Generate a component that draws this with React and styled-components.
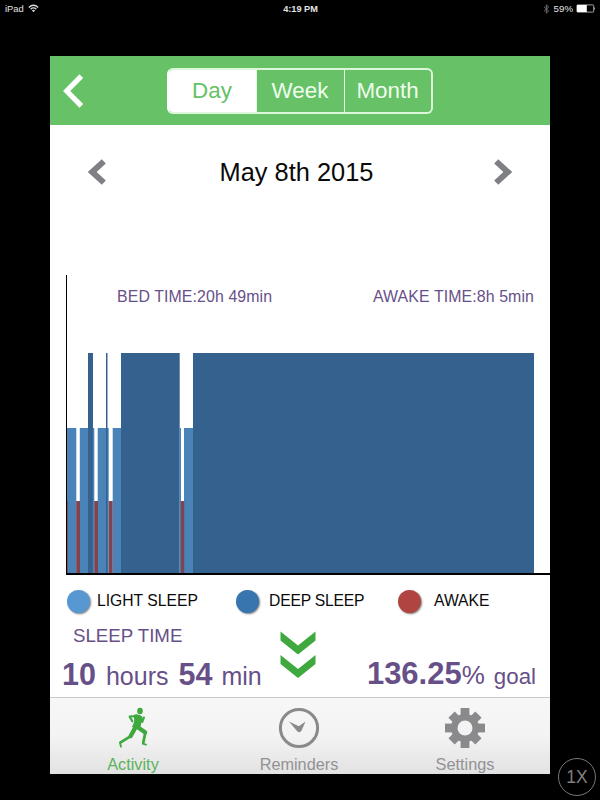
import { useState } from "react";
import styled, { createGlobalStyle } from "styled-components";

const colors = {
  green: "#66c167",
  greenIcon: "#3fa93f",
  purple: "#675088",
  grey: "#8a8a8c",
  deep: "#35618f",
  light: "#4983b7",
  awake: "#80434f",
};

// x positions are relative to the y axis
const bars = [
  { x: 0, w: 9.3, type: "light" },
  { x: 12.8, w: 8.7, type: "light" },
  { x: 21, w: 5, type: "deep" },
  { x: 25.8, w: 1.5, type: "light" },
  { x: 30.7, w: 11, type: "light" },
  { x: 39, w: 1.5, type: "deep" },
  { x: 45.7, w: 8.5, type: "light" },
  { x: 54, w: 58.7, type: "deep" },
  { x: 112.5, w: 1.5, type: "light" },
  { x: 117, w: 9, type: "light" },
  { x: 126, w: 341, type: "deep" },
  { x: 0, w: 0.8, type: "awake" },
  { x: 9.2, w: 3.8, type: "awake" },
  { x: 27.2, w: 3.8, type: "awake" },
  { x: 41.7, w: 4, type: "awake" },
  { x: 113.8, w: 3.4, type: "awake" },
];
const heights = { deep: 220, light: 145, awake: 72 };

const legend = [
  { label: "LIGHT SLEEP", color: "#5797d2", width: 169, gap: 6 },
  { label: "DEEP SLEEP", color: "#3874ae", width: 162, gap: 9, spacing: -0.2 },
  { label: "AWAKE", color: "#b04440", width: 110, gap: 12 },
];

const RunnerIcon = () => (
  <svg width="30" height="42" viewBox="205 50 90 126">
    <ellipse cx="271" cy="62" rx="8.5" ry="10" fill={colors.greenIcon} />
    <path
      d="M253 73 Q268 69 279 80 L274 104 Q272 116 257 117 L247 109 Q256 96 253 83 Z"
      fill={colors.greenIcon}
    />
    <g
      fill="none"
      stroke={colors.greenIcon}
      strokeLinecap="round"
      strokeLinejoin="round"
    >
      <path d="M259 77 L240 79 L248 93" strokeWidth="6.5" />
      <path d="M274 83 L278 95 L283 81" strokeWidth="6" />
      <path d="M260 108 L286 126" strokeWidth="13" />
      <path d="M287 127 L281 156" strokeWidth="8.5" />
      <path d="M279 160 L289 163" strokeWidth="5.5" />
      <path d="M258 109 Q252 121 243 137" strokeWidth="13" />
      <path d="M242 138 L213 156" strokeWidth="8.5" />
      <path d="M211 157 L214 169" strokeWidth="5.5" />
    </g>
  </svg>
);

const ClockIcon = () => (
  <svg width="42" height="42" viewBox="-21 -21 42 42">
    <circle r="18.6" fill="none" stroke={colors.grey} strokeWidth="3" />
    <path
      d="M-10 -6.5 L-0.2 -1.8 L6.5 -6.5 L2.6 2.6 Q0.6 5.4 -1.8 3.2 Z"
      fill={colors.grey}
    />
  </svg>
);

const GearIcon = () => (
  <svg width="42" height="42" viewBox="-21 -21 42 42">
    <g fill={colors.grey}>
      {[0, 45, 90, 135].map((angle) => (
        <rect
          key={angle}
          x="-4.4"
          y={angle % 90 ? -19 : -20}
          width="8.8"
          height={angle % 90 ? 38 : 40}
          transform={`rotate(${angle})`}
        />
      ))}
      <circle r="14" />
    </g>
    <circle r="7.5" fill="#f3f3f4" />
  </svg>
);

const tabs = [
  { name: "Activity", Icon: RunnerIcon },
  { name: "Reminders", Icon: ClockIcon },
  { name: "Settings", Icon: GearIcon },
];

const App = () => {
  const [range, setRange] = useState("Day");
  const [tab, setTab] = useState("Activity");
  return (
    <Screen>
      <GlobalStyle />
      <StatusBar>
        <StatusGroup>
          iPad
          <svg width="11" height="9" viewBox="0 0 11 9" fill="none" stroke="#ddd">
            <path d="M0.8 3.4 Q5.5 -0.9 10.2 3.4" strokeWidth="1.3" />
            <path d="M2.6 5.2 Q5.5 2.6 8.4 5.2" strokeWidth="1.3" />
            <path d="M5.5 8.2 L3.9 6.5 Q5.5 5.2 7.1 6.5 Z" fill="#ddd" stroke="none" />
          </svg>
        </StatusGroup>
        <Clock>4:19 PM</Clock>
        <StatusGroup $end>
          <svg width="7" height="10" viewBox="0 0 7 10" fill="none" stroke="#777">
            <path d="M1 2.7 L5.7 7 L3.4 9.2 V0.8 L5.7 3 L1 7.3" strokeWidth="0.9" />
          </svg>
          <Battery>59%</Battery>
          <svg width="20" height="9" viewBox="0 0 20 9">
            <rect x="0.9" y="0.9" width="16.8" height="7.2" rx="0.8" fill="none" stroke="#ccc" strokeWidth="0.8" />
            <rect x="1" y="1" width="9.8" height="7" fill="#fff" />
            <path d="M18.2 3 Q20 4.5 18.2 6 Z" fill="#ccc" />
          </svg>
        </StatusGroup>
      </StatusBar>

      <Phone>
        <Header>
          <IconButton>
            <svg width="22" height="36" viewBox="0 0 22 36">
              <path d="M18.3 3.2 L3.7 18 L18.3 32.8" fill="none" stroke="#fff" strokeWidth="5.2" />
            </svg>
          </IconButton>
          <Segments>
            {["Day", "Week", "Month"].map((name) => (
              <Segment key={name} $active={range === name} onClick={() => setRange(name)}>
                {name}
              </Segment>
            ))}
          </Segments>
        </Header>

        <DateRow>
          <IconButton>
            <svg width="20" height="28" viewBox="0 0 20 28">
              <path d="M16.8 3.4 L5.2 14 L16.8 24.6" fill="none" stroke="#7f8084" strokeWidth="6" />
            </svg>
          </IconButton>
          <DateText>May 8th 2015</DateText>
          <IconButton>
            <svg width="20" height="28" viewBox="0 0 20 28">
              <path d="M3.2 3.4 L14.8 14 L3.2 24.6" fill="none" stroke="#7f8084" strokeWidth="6" />
            </svg>
          </IconButton>
        </DateRow>

        <Chart>
          <ChartLabels>
            <span>BED TIME:20h 49min</span>
            <span>AWAKE TIME:8h 5min</span>
          </ChartLabels>
          <svg width="482" height="220" viewBox="0 0 482 220">
            {bars.map(({ x, w, type }) => (
              <rect
                key={`${type}-${x}`}
                x={x}
                y={220 - heights[type]}
                width={w}
                height={heights[type]}
                fill={colors[type]}
              />
            ))}
          </svg>
        </Chart>

        <Legend>
          {legend.map(({ label, color, width, gap, spacing }) => (
            <LegendItem key={label} $width={width} $gap={gap} $spacing={spacing}>
              <Dot $color={color} />
              {label}
            </LegendItem>
          ))}
        </Legend>

        <Summary>
          <SleepTime>
            <SummaryTitle>SLEEP TIME</SummaryTitle>
            <Value>
              <Big>10</Big>
              <Unit $left={10}>hours</Unit>
              <Big $left={10}>54</Big>
              <Unit $left={9}>min</Unit>
            </Value>
          </SleepTime>
          <MoreButton>
            <svg width="36" height="48" viewBox="0 0 36 48" fill={colors.greenIcon}>
              <path d="M0.5 0.5 L18 14.5 L35.5 0.5 V9.5 L18 23.4 L0.5 9.5 Z" />
              <path d="M0.5 24 L18 38 L35.5 24 V33 L18 47 L0.5 33 Z" />
            </svg>
          </MoreButton>
          <Goal>
            <Big $size={31}>136.25</Big>
            <Unit $size={26}>%</Unit>
            <Unit $size={22.3} $left={9}>goal</Unit>
          </Goal>
        </Summary>

        <TabBar>
          {tabs.map(({ name, Icon }) => (
            <Tab key={name} $active={tab === name} onClick={() => setTab(name)}>
              <Icon />
              <span>{name}</span>
            </Tab>
          ))}
        </TabBar>
      </Phone>

      <ScaleButton>1X</ScaleButton>
    </Screen>
  );
};

const GlobalStyle = createGlobalStyle`
  body {
    margin: 0;
    background: #000;
  }
  * {
    box-sizing: border-box;
  }
  svg {
    display: block;
    flex-shrink: 0;
  }
  button {
    font-family: inherit;
    padding: 0;
    border: none;
    background: none;
    cursor: pointer;
  }
`;
const Screen = styled.div`
  position: relative;
  width: 600px;
  height: 800px;
  overflow: hidden;
  background: #000;
  font-family: "Liberation Sans", Arial, sans-serif;
  white-space: nowrap;
`;
const StatusBar = styled.div`
  display: grid;
  grid-template-columns: 1fr auto 1fr;
  align-items: center;
  height: 17px;
  padding: 0 4px 0 5px;
  color: #e4e4e4;
  font-size: 9.4px;
`;
const StatusGroup = styled.div`
  display: flex;
  align-items: center;
  gap: 4px;
  justify-content: ${({ $end }) => ($end ? "flex-end" : "flex-start")};
`;
const Clock = styled.span`
  font-weight: 700;
  font-size: 9.2px;
`;
const Battery = styled.span`
  font-size: 9.7px;
  margin-right: -1px;
`;
const Phone = styled.div`
  display: flex;
  flex-direction: column;
  width: 500px;
  height: 718px;
  margin: 39px auto 0;
  background: #fff;
`;
const Header = styled.div`
  display: flex;
  align-items: center;
  height: 69px;
  padding-left: 13px;
  background: ${colors.green};
`;
const IconButton = styled.button`
  display: flex;
`;
const Segments = styled.div`
  display: grid;
  grid-template-columns: 87px 88px 87px;
  width: 266px;
  height: 46px;
  margin-left: 82px;
  border: 2px solid #dcf6da;
  border-left-color: #fff;
  border-radius: 6px;
  overflow: hidden;
`;
const Segment = styled.button`
  font-size: 22.4px;
  padding-right: 1px;
  color: ${({ $active }) => ($active ? colors.green : "#effdec")};
  background: ${({ $active }) => ($active ? "#fff" : "transparent")};

  & + & {
    border-left: 1.5px solid #e6fbe4;
  }
`;
const DateRow = styled.div`
  display: flex;
  align-items: center;
  justify-content: space-between;
  height: 94px;
  padding: 0 37px;
`;
const DateText = styled.span`
  font-size: 25.4px;
  color: #0a0a0a;
  margin-right: 7px;
`;
const Chart = styled.div`
  display: flex;
  flex-direction: column;
  justify-content: space-between;
  height: 300px;
  margin: 56px 0 0 16px;
  border-left: 1px solid #000;
  border-bottom: 2px solid #000;
`;
const ChartLabels = styled.div`
  display: flex;
  justify-content: space-between;
  padding: 13px 16px 0 50px;
  font-size: 15.9px;
  letter-spacing: 0.1px;
  line-height: 18px;
  color: ${colors.purple};
`;
const Legend = styled.div`
  display: flex;
  align-items: center;
  height: 52px;
  padding-left: 17px;
  font-size: 15.7px;
  color: #0a0a0a;
`;
const LegendItem = styled.div`
  display: flex;
  align-items: center;
  gap: ${({ $gap }) => $gap}px;
  width: ${({ $width }) => $width}px;
  letter-spacing: ${({ $spacing = 0 }) => $spacing}px;
`;
const Dot = styled.span`
  width: 23px;
  height: 23px;
  margin: 1px 1px 0 0;
  border-radius: 50%;
  background: ${({ $color }) => $color};
  box-shadow: 1px 1px 2px rgba(0, 0, 0, 0.5);
`;
const Summary = styled.div`
  display: grid;
  grid-template-columns: 218px 36px 1fr;
  align-items: start;
  flex: 1;
  padding: 0 14px 0 12px;
  color: ${colors.purple};
`;
const SleepTime = styled.div`
  display: flex;
  flex-direction: column;
  gap: 11px;
`;
const SummaryTitle = styled.span`
  padding-left: 11px;
  font-size: 18.7px;
  line-height: 18px;
`;
const Value = styled.div`
  display: flex;
  align-items: baseline;
  line-height: 36px;
`;
const MoreButton = styled.button`
  padding-top: 4px;
`;
const Goal = styled(Value)`
  justify-content: flex-end;
  margin-top: 29px;
`;
const Big = styled.span`
  font-size: ${({ $size = 30.5 }) => $size}px;
  font-weight: 700;
  margin-left: ${({ $left = 0 }) => $left}px;
`;
const Unit = styled.span`
  font-size: ${({ $size = 25 }) => $size}px;
  margin-left: ${({ $left = 0 }) => $left}px;
`;
const TabBar = styled.div`
  display: grid;
  grid-template-columns: repeat(3, 166px);
  height: 77px;
  border-top: 1px solid #c9c9c9;
  background: linear-gradient(#f7f7f8, #f3f3f4 50%, #e2e2e3);
`;
const Tab = styled.button`
  display: flex;
  flex-direction: column;
  align-items: center;
  padding-top: 9px;
  gap: 6px;
  font-size: 16.3px;
  line-height: 18px;
  color: ${({ $active }) => ($active ? "#5bb35b" : "#929294")};
`;
const ScaleButton = styled.button`
  position: absolute;
  left: 558px;
  top: 758px;
  width: 38px;
  height: 38px;
  && {
    border: 1px solid #777;
  }
  border-radius: 50%;
  font-size: 17.5px;
  color: #808080;
`;

export default App;
